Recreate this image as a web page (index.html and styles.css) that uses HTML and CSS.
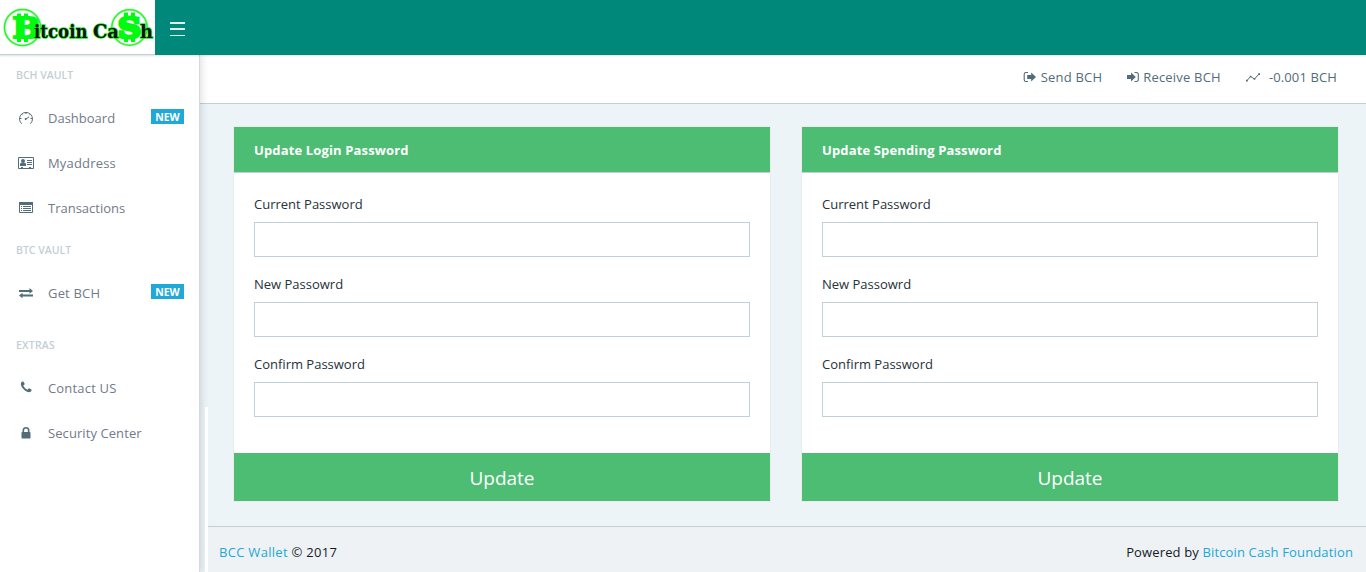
FILE: index.html
```html
<!DOCTYPE html>
<html lang="en">
<head>
<meta charset="utf-8">
<title>BCC Wallet</title>
<link rel="stylesheet" href="styles.css">
</head>
<body>
<header class="header">
  <a class="brand">
    <svg width="155" height="54" viewBox="0 0 155 54">
      <g fill="none" stroke="#26f52b" stroke-width="1.5"><circle cx="22.5" cy="27.5" r="18"/><circle cx="129.500" cy="27.500" r="17.700"/></g>
      <g class="coin-halo"><circle cx="22.500" cy="27.500" r="18"/><circle cx="129.500" cy="27.500" r="17.700"/></g>
      <g fill="#00fa10"><path d="M17 13.500h4v4h-4zM24 13.500h4v4h-4zM17 38h4v4h-4zM24 38h4v4h-4zM124 12.500h4v5h-4zM131 12.500h4v5h-4zM124 38h4v4h-4zM131 38h4v4h-4z"/></g>
      <text class="logo-big" x="12.500" y="38" textLength="28" lengthAdjust="spacingAndGlyphs">B</text>
      <text class="logo-text" x="34" y="38" textLength="53.500" lengthAdjust="spacingAndGlyphs">itcoin</text>
      <text class="logo-text" x="93" y="38" textLength="26" lengthAdjust="spacingAndGlyphs">Ca</text>
      <text class="logo-big dollar" x="118" y="38" textLength="23" lengthAdjust="spacingAndGlyphs">S</text>
      <text class="logo-text" x="140" y="38" textLength="13" lengthAdjust="spacingAndGlyphs">h</text>
    </svg>
  </a>
  <button class="toggler"><span></span><span></span><span></span></button>
</header>
<div class="body">
  <nav class="sidebar">
    <div class="title">BCH VAULT</div>
    <a class="item"><svg class="icon" viewBox="0 0 16 16"><g fill="none" stroke="currentColor"><path d="M3.600 13.700A6.500 6.500 0 1 1 12.400 13.700"/><path d="M8 2.500v1.500M3.800 4.300l.9.900M12.200 4.300l-.9.900M2 8.500h1.500M12.500 8.500H14M7.500 9.300l3.500-2.400" /></g><circle cx="7.700" cy="9" r="1" fill="currentColor"/></svg><span>Dashboard</span><b class="badge">NEW</b></a>
    <a class="item"><svg class="icon" viewBox="0 0 16 16"><path d="M.5 2.500h15v11H.5z" fill="none" stroke="currentColor"/><path d="M2 11V8.500L3.500 7.700h3L8 8.500V11zM9 5h5v1H9zM9 7h5v1H9zM9 9h5v1H9zM3 12h2v1H3zM11 12h2v1h-2z" fill="currentColor"/><circle cx="5" cy="6" r="2" fill="currentColor"/></svg><span class="loose">Myaddress</span></a>
    <a class="item"><svg class="icon" viewBox="0 0 16 16"><path d="M1.500 2.500h13v10h-13z" fill="none" stroke="currentColor"/><path d="M1 2h14v3H1zM3 6h1v1H3zM5 6h8v1H5zM3 8h1v1H3zM5 8h8v1H5zM3 10h1v1H3zM5 10h8v1H5z" fill="currentColor"/></svg><span>Transactions</span></a>
    <div class="title">BTC VAULT</div>
    <a class="item"><svg class="icon" viewBox="0 0 16 16"><path d="M1 5h10.500V3L15 6l-3.500 2.700V7H1zM15 9.500H4.500V7.800L1 10.500l3.500 2.700v-1.700H15z" fill="currentColor"/></svg><span class="loose">Get BCH</span><b class="badge">NEW</b></a>
    <div class="title extras">EXTRAS</div>
    <a class="item"><svg class="icon" viewBox="-180 -60 2100 2100"><path transform="translate(192 0)" d="M1408 1240q0 27-10 70.500T1377 1379q-21 50-122 106-94 51-186 51-27 0-53-3.500t-57.500-12.500-47-14.500T856 1485t-49-18q-98-35-175-83-127-79-264-216T152 904q-48-77-83-175-3-9-18-49t-20.500-55.500-14.500-47T3.500 520 0 467q0-92 51-186 56-101 106-122 25-11 68.500-21t70.500-10q14 0 21 3 18 6 53 76 11 19 30 54t35 63.500 31 53.500q3 4 17.500 25t21.500 35.500 7 28.500q0 20-28.500 50t-62 55-62 53-28.500 46q0 9 5 22.500t8.500 20.500 14 24 11.500 19q76 137 174 235t235 174q2 1 19 11.500t24 14 20.500 8.500 22.500 5q18 0 46-28.500t53-62 55-62 50-28.500q14 0 28.500 7t35.500 21.500 25 17.500q25 15 53.500 31t63.500 35 54 30q70 35 76 53 3 7 3 21z" fill="currentColor"/></svg><span class="loose">Contact US</span></a>
    <a class="item"><svg class="icon" viewBox="0 0 16 16"><path d="M5.300 8V5.400a2.700 2.700 0 0 1 5.400 0V8" fill="none" stroke="currentColor" stroke-width="1.600"/><rect x="3.500" y="7" width="9" height="6.500" rx=".7" fill="currentColor"/></svg><span class="tight">Security Center</span></a>
  </nav>
  <div class="main">
    <div class="actions">
      <a class="send"><svg viewBox="0 0 14 14"><path d="M5 2.500H3a1.800 1.800 0 0 0-1.800 1.800v5.400A1.800 1.800 0 0 0 3 11.500h2" fill="none" stroke="currentColor" stroke-width="1.100"/><path d="M4.200 5.100h4V2.500L13 7l-4.800 4.500V9h-4z" fill="currentColor"/></svg><span>Send BCH</span></a>
      <a class="receive"><svg viewBox="0 0 14 14"><path d="M8.500 2.500h2a1.800 1.800 0 0 1 1.800 1.800v5.400a1.800 1.800 0 0 1-1.800 1.800h-2" fill="none" stroke="currentColor" stroke-width="1.100"/><path d="M1 5.100h4V2.500L9.800 7 5 11.500V9H1z" fill="currentColor"/></svg><span>Receive BCH</span></a>
      <a class="balance"><svg viewBox="0 0 16 14"><path d="M2 10.500l3.500-4 4 2.500L14 4" fill="none" stroke="currentColor"/><path d="M1 9.800h1.800v1.800H1zM4.700 5.700h1.600v1.600H4.700zM8.700 8.200h1.600v1.600H8.700zM13.200 3.200H15V5h-1.800z" fill="currentColor"/></svg><span>-0.001 BCH</span></a>
    </div>
    <main class="cards">
      <form class="card">
        <h2 class="card-head">Update Login Password</h2>
        <div class="card-body">
          <label>Current Password</label><input type="password">
          <label>New Passowrd</label><input type="password">
          <label>Confirm Password</label><input type="password">
        </div>
        <button type="button" class="update">Update</button>
      </form>
      <form class="card">
        <h2 class="card-head">Update Spending Password</h2>
        <div class="card-body">
          <label>Current Password</label><input type="password">
          <label>New Passowrd</label><input type="password">
          <label>Confirm Password</label><input type="password">
        </div>
        <button type="button" class="update">Update</button>
      </form>
    </main>
    <footer class="footer"><span class="copyright"><a>BCC Wallet</a> © 2017</span><span>Powered by <a>Bitcoin Cash Foundation</a></span></footer>
    <div class="strip"></div>
  </div>
</div>
</body>
</html>
```
FILE: styles.css
```css
* { box-sizing: border-box; }
body { margin: 0; height: 572px; overflow: hidden; font: 13px/20px "Open Sans", "Noto Sans", sans-serif; color: #263238; background: #ecf4f8; }
.header { position: relative; z-index: 3; height: 55px; display: flex; background: #00897b; box-shadow: 0 1px 2px rgba(0,0,0,.13); }
.brand { width: 155px; height: 55px; background: #fff; border-bottom: 1px solid #c2cfd6; }
.brand svg { display: block; }
.coin-halo { fill: none; stroke: #26f52b; stroke-width: 3; opacity: .22; }
.logo-big { font: bold 28px "DejaVu Serif", serif; fill: #00fa10; stroke: #00fa10; stroke-width: 2.200; }
.logo-big.dollar { stroke-width: 3.200; }
.logo-text { font: bold 18.500px "DejaVu Serif", serif; fill: #101610; stroke: #19e51d; stroke-width: 1.400; paint-order: stroke; }
.toggler { margin: 22px 0 0 15px; padding: 0; width: 15px; height: 14px; border: 0; background: none; display: flex; flex-direction: column; justify-content: space-between; }
.toggler span { width: 15px; height: 1.500px; background: #e0efed; }
.body { display: flex; height: 517px; }
.sidebar { position: relative; z-index: 2; flex: 0 0 200px; background: #fff; border-right: 1px solid #d3d8dc; box-shadow: 2px 0 7px rgba(0,0,0,.12); color: #727a8a; }
.title { height: 40px; padding: 10px 16px; font-size: 10.500px; font-weight: 600; color: #c2cfd6; }
.title.extras { height: 50px; padding-top: 20px; letter-spacing: .2px; }
.item { display: flex; align-items: center; height: 45px; padding: 1px 15px 0 18px; }
.icon { width: 16px; height: 16px; margin-right: 14px; color: #536c79; }
.item span { flex: 1; }
.item .loose { letter-spacing: .18px; }
.item .tight { letter-spacing: .08px; }
.badge { width: 33px; height: 15px; margin-top: -3px; background: #20a8d8; color: #fff; font-size: 10.500px; line-height: 16px; font-weight: 700; text-align: center; }
.main { position: relative; flex: 1; display: flex; flex-direction: column; }
.actions { height: 49px; background: #fff; border-bottom: 1px solid #c2cfd6; display: flex; justify-content: flex-end; align-items: center; padding: 0 29px 4px 0; color: #536c79; letter-spacing: .2px; }
.actions a { display: flex; align-items: center; }
.actions svg { width: 14px; height: 14px; margin-right: 4px; }
.actions .receive { margin-left: 24px; }
.actions .receive svg { margin-right: 3px; }
.actions .balance { margin-left: 24px; letter-spacing: .12px; }
.actions .balance svg { width: 16px; margin-right: 8px; }
.cards { flex: 1; display: grid; grid-template-columns: 538px 538px; gap: 30px; padding: 22px 0 0 33px; align-items: start; }
.card { height: 376px; border: 1px solid #e8eaec; background: #fff; }
.card-head { margin: 0; height: 46px; padding: 13px 20px; background: #4dbd74; border-bottom: 1px solid #c2cfd6; color: #fff; font-size: 13px; line-height: 20px; font-weight: 700; letter-spacing: .14px; }
.card-body { height: 280px; padding: 21px 20px; }
.card-body label { display: block; height: 28px; }
.card-body input { display: block; width: 496px; height: 35px; margin: 0 0 17px; border: 1px solid #c2cfd6; background: #fff; }
.update { display: block; width: 536px; height: 48px; border: 0; padding: 1px 0 0; background: #4dbd74; color: #fff; font: 19px "Open Sans", sans-serif; }
.footer { height: 46px; margin-left: 8px; padding: 5px 13px 0 11px; border-top: 1px solid #c2cfd6; background: #eef2f5; display: flex; align-items: center; justify-content: space-between; color: #151b1e; letter-spacing: .14px; }
.copyright { letter-spacing: .3px; }
.footer a { color: #20a8d8; }
.strip { position: absolute; z-index: 3; left: 5px; bottom: 0; width: 3px; height: 165px; background: #fff; }
```
